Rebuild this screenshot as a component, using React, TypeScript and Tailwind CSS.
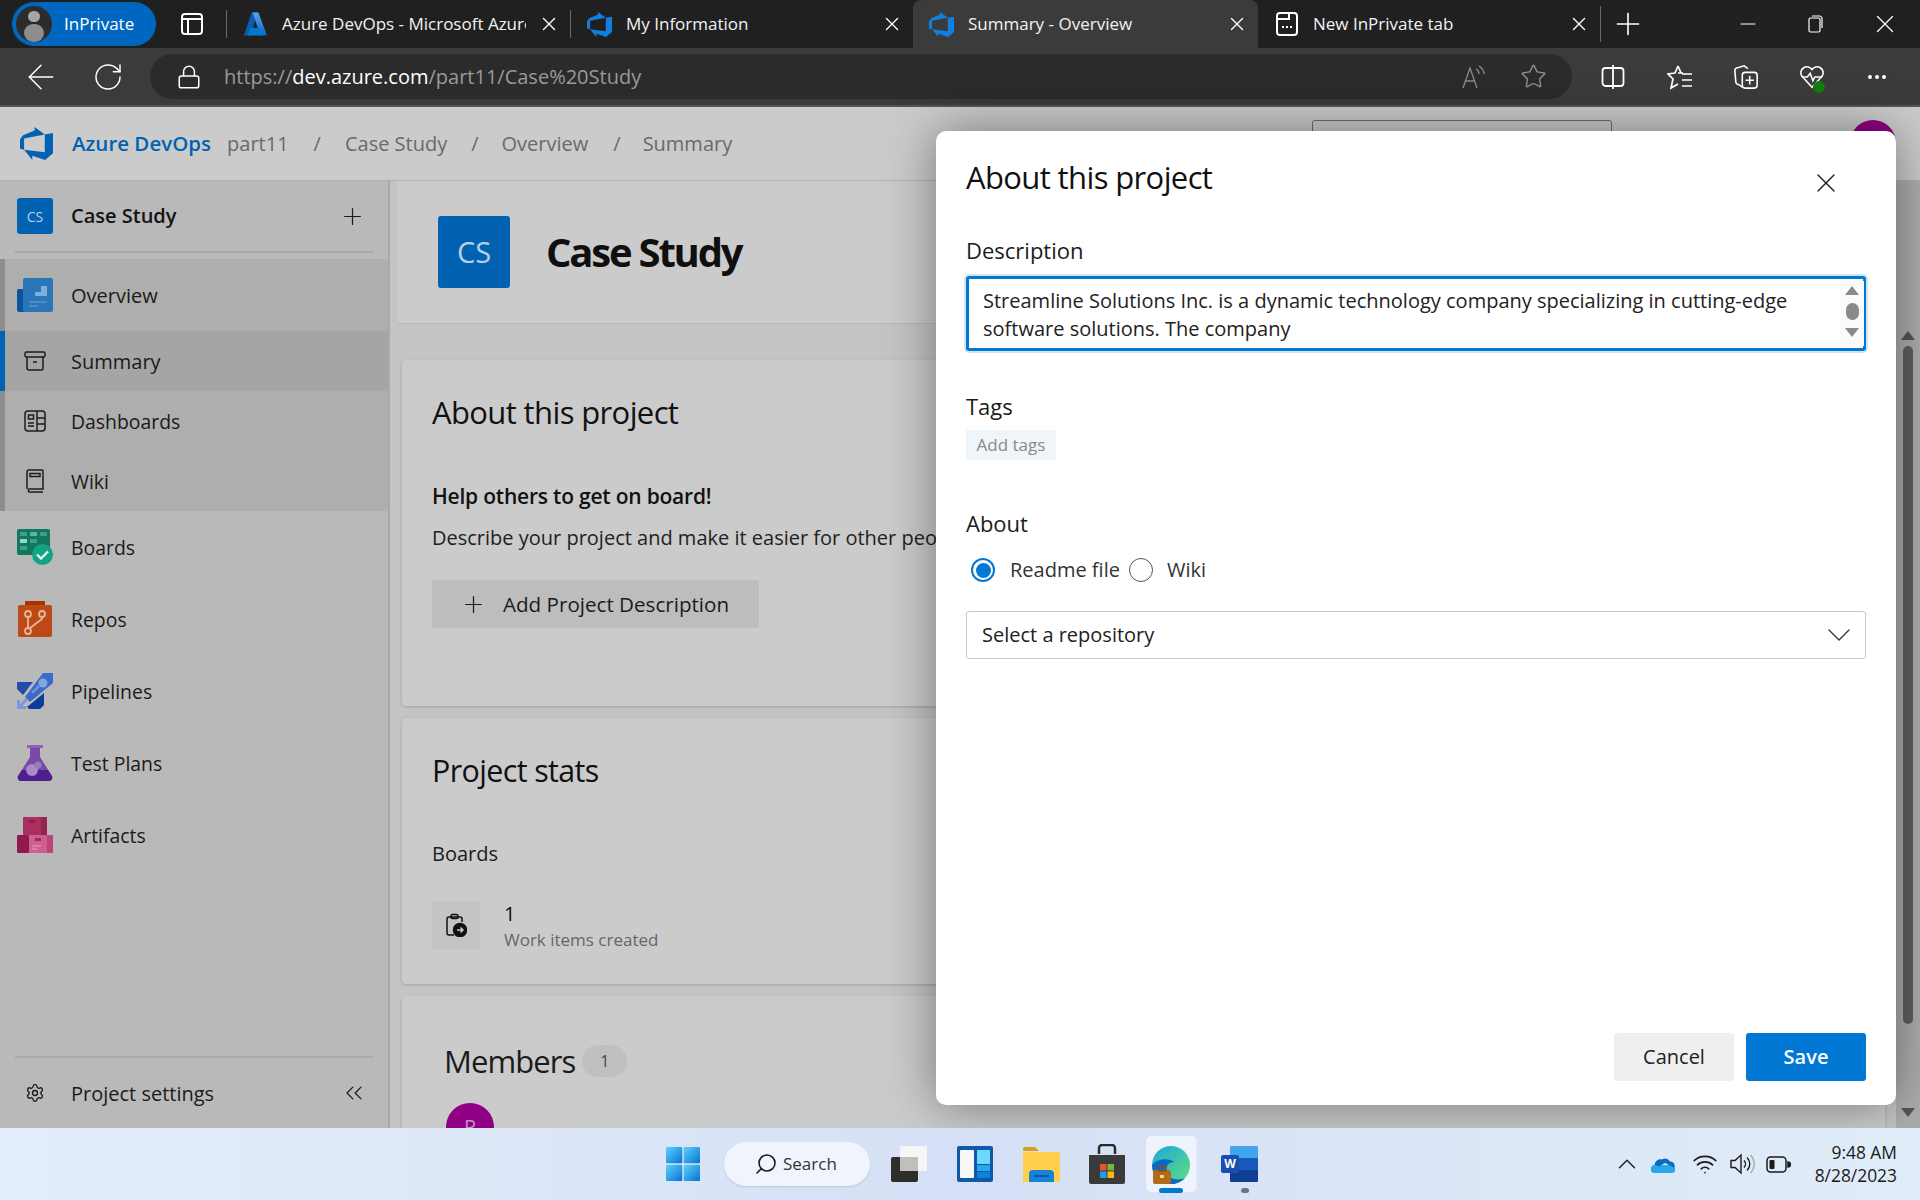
import React from 'react';
import { ArrowLeft, ChevronsLeft, ChevronDown, ChevronUp, Lock, Minus, Plus, RotateCw, Search, Settings, Star, Wifi, X } from 'lucide-react';

const DEVOPS_PATH = 'M0 8.899l2.247-2.966 8.405-3.416V.045l7.37 5.393L2.966 8.36v8.224L0 15.73zm24-4.45v14.652l-5.753 4.9-9.303-3.057v3.056l-5.978-7.416 15.057 1.796V5.438z';

const DevOpsIcon = ({ size, color }: { size: number; color: string }) => (
    <svg width={size} height={size} viewBox="0 0 24 24"><path d={DEVOPS_PATH} fill={color} /></svg>
);

const AzureIcon = () => (
    <svg width="26" height="28" viewBox="0 0 26 28">
        <defs>
            <linearGradient id="az" x1="0" y1="0" x2="0" y2="1"><stop offset="0" stopColor="#5ea0ef" /><stop offset="1" stopColor="#0669bc" /></linearGradient>
        </defs>
        <path d="M9 2h7L7 26H1z" fill="#0a5cb0" />
        <path d="M16 2l9 24h-7L10 2z" fill="url(#az)" />
        <path d="M8 18h9l3 8H5z" fill="#0078d4" />
    </svg>
);

const Tab = ({ icon, title, active, w, fade }: { icon: React.ReactNode; title: string; active?: boolean; w: string; fade?: boolean }) => (
    <div className={`${w} h-[48px] flex items-center pl-[16px] pr-[10px] shrink-0 ${active ? 'bg-[#3b3b3b] rounded-t-[8px]' : ''}`}>
        <span className="w-[25px] flex justify-center shrink-0">{icon}</span>
        <span className={`ml-[14px] flex-1 text-[17px] text-[#f2f2f2] whitespace-nowrap overflow-hidden ${fade ? 'mr-[12px]' : ''}`}>{title}</span>
        <X size={22} strokeWidth={1.5} className="text-white shrink-0" />
    </div>
);

const TabBar = () => (
    <div className="h-[48px] bg-[#202020] flex items-center shrink-0">
        <div className="ml-[12px] w-[144px] h-[44px] rounded-full bg-[#0067c0] flex items-center">
            <div className="ml-[4px] w-[36px] h-[36px] rounded-full bg-[#2c2c2c] overflow-hidden flex flex-col items-center">
                <span className="mt-[5px] w-[12px] h-[13px] rounded-full bg-[#a5a5a5]" />
                <span className="mt-[2px] w-[20px] h-[20px] rounded-full bg-[#8d8d8d]" />
            </div>
            <span className="ml-[12px] text-[17px] text-white">InPrivate</span>
        </div>
        <svg className="ml-[25px]" width="22" height="24" viewBox="0 0 22 24" fill="none" stroke="#fff" strokeWidth="2">
            <rect x="1" y="2" width="20" height="20" rx="3" />
            <path d="M1 7h20M7 7v15" />
        </svg>
        <div className="ml-[23px] w-px h-[28px] bg-[#6b6b6b]" />
        <Tab w="w-[343px]" icon={<AzureIcon />} title="Azure DevOps - Microsoft Azure" fade />
        <div className="w-px h-[28px] bg-[#6b6b6b]" />
        <Tab w="w-[342px]" icon={<DevOpsIcon size={25} color="#0f7fe0" />} title="My Information" />
        <Tab w="w-[345px]" active icon={<DevOpsIcon size={25} color="#0f7fe0" />} title="Summary - Overview" />
        <Tab
            w="w-[342px]"
            icon={
                <svg width="22" height="26" viewBox="0 0 22 26" fill="none" stroke="#fff" strokeWidth="2">
                    <rect x="1" y="2" width="20" height="22" rx="3" />
                    <path d="M1 8h12V2" />
                    <path d="M6 16h2M10 16h2M14 16h2" />
                </svg>
            }
            title="New InPrivate tab"
        />
        <div className="w-px h-[36px] bg-[#6b6b6b]" />
        <Plus size={36} strokeWidth={1.1} className="ml-[9px] text-white" />
        <Minus size={24} strokeWidth={1} className="ml-[90px] text-white" />
        <svg className="ml-[48px]" width="16" height="20" viewBox="0 0 16 20" fill="none" stroke="#fff" strokeWidth="1.2">
            <rect x="1" y="4" width="11" height="14" rx="1.5" />
            <path d="M4 2h8a3 3 0 0 1 2 2v10" />
        </svg>
        <X size={30} strokeWidth={1} className="ml-[46px] text-white" />
    </div>
);

const ToolIcon = ({ className, children }: { className?: string; children: React.ReactNode }) => (
    <span className={`w-[26px] h-[26px] flex items-center justify-center shrink-0 ${className ?? ''}`}>{children}</span>
);

const Toolbar = () => (
    <div className="h-[59px] bg-[#3b3b3b] border-b-[2px] border-[#555555] flex items-center shrink-0">
        <ArrowLeft size={40} strokeWidth={0.9} className="ml-[21px] text-white" />
        <RotateCw size={32} strokeWidth={1.1} className="ml-[31px] text-white" />
        <div className="ml-[26px] w-[1422px] h-[45px] bg-[#2b2b2b] rounded-full flex items-center">
            <Lock size={26} strokeWidth={1.4} className="ml-[26px] text-white" />
            <span className="ml-[22px] text-[20px] text-[#9a9a9a] whitespace-nowrap">
                https://<span className="text-white">dev.azure.com</span>/part11/Case%20Study
            </span>
            <div className="ml-auto flex items-center mr-[25px]">
                <svg className="mr-[33px]" width="26" height="26" viewBox="0 0 26 26" fill="none" stroke="#8a8a8a" strokeWidth="1.3">
                    <path d="M2 24L9 4l7 20M4.5 17h9" />
                    <path d="M15 5c2 1 3 3 3 5M18 2c3 2 5 5 5 8" />
                </svg>
                <Star size={27} strokeWidth={1.3} className="text-[#8a8a8a]" />
            </div>
        </div>
        <ToolIcon className="ml-[28px]">
            <svg width="24" height="26" viewBox="0 0 24 26" fill="none" stroke="#fff" strokeWidth="1.8">
                <rect x="1.5" y="4" width="21" height="18" rx="3" />
                <path d="M12 1v24" />
            </svg>
        </ToolIcon>
        <ToolIcon className="ml-[41px]">
            <svg width="26" height="26" viewBox="0 0 26 26" fill="none" stroke="#fff" strokeWidth="1.7">
                <path d="M11 2l3 7h-3l5 0M11 2L8 9l-7 1 5 5-2 9 7-4" />
                <path d="M15 10h10M15 16h10M15 22h10" />
            </svg>
        </ToolIcon>
        <ToolIcon className="ml-[40px]">
            <svg width="28" height="28" viewBox="0 0 28 28" fill="none" stroke="#fff" strokeWidth="1.7">
                <path d="M10 25L6 22a3 3 0 0 1-3-3L2 7a3 3 0 0 1 3-3l7-2 4 3" />
                <rect x="10" y="9" width="16" height="17" rx="3" />
                <path d="M18 13v9M13.5 17.5h9" />
            </svg>
        </ToolIcon>
        <ToolIcon className="ml-[40px] relative">
            <svg width="28" height="26" viewBox="0 0 28 26" fill="none" stroke="#fff" strokeWidth="1.7">
                <path d="M14 24L3 12a6 6 0 0 1 11-7 6 6 0 0 1 11 7L14 24z" />
                <path d="M3 13h6l3-4 3 8 2-4h8" />
            </svg>
            <span className="absolute right-[0px] bottom-[-3px] w-[12px] h-[12px] rounded-full bg-[#107c10]" />
        </ToolIcon>
        <span className="ml-[43px] flex gap-[3px]">
            <span className="w-[4px] h-[4px] rounded-full bg-white" />
            <span className="w-[4px] h-[4px] rounded-full bg-white" />
            <span className="w-[4px] h-[4px] rounded-full bg-white" />
        </span>
    </div>
);

const Crumb = ({ children, className }: { children: React.ReactNode; className: string }) => (
    <span className={`text-[20px] text-[#6a6a6a] whitespace-nowrap ${className}`}>{children}</span>
);

const Header = () => (
    <div className="h-[74px] bg-[#cbcbcb] border-b border-[#b2b2b2] flex items-center shrink-0 relative">
        <span className="ml-[20px]"><DevOpsIcon size={33} color="#0062b0" /></span>
        <span className="ml-[19px] text-[20.5px] font-semibold text-[#0062b0] whitespace-nowrap">Azure DevOps</span>
        <Crumb className="ml-[16px]">part11</Crumb>
        <Crumb className="ml-[25px]">/</Crumb>
        <Crumb className="ml-[24px]">Case Study</Crumb>
        <Crumb className="ml-[24px]">/</Crumb>
        <Crumb className="ml-[23px]">Overview</Crumb>
        <Crumb className="ml-[25px]">/</Crumb>
        <Crumb className="ml-[22px]">Summary</Crumb>
        <div className="absolute left-[1312px] top-[13px] w-[300px] h-[40px] rounded-[3px] border border-[#6b6b6b]" />
        <div className="absolute left-[1850px] top-[13px] w-[46px] h-[46px] rounded-full bg-[#8f0085]" />
    </div>
);

const OverviewIcon = () => (
    <svg width="36" height="34" viewBox="0 0 36 34">
        <rect x="0" y="11" width="14" height="23" rx="2" fill="#0b559c" />
        <rect x="6" y="0" width="30" height="34" rx="2" fill="#2a76b8" />
        <path d="M12 18h6v-4h6V8h6v10" fill="#7fb0d9" />
        <path d="M12 24h18M12 28h9" stroke="#6ba3d3" strokeWidth="1.2" />
    </svg>
);

const SummaryIcon = () => (
    <svg width="22" height="20" viewBox="0 0 22 20" fill="none" stroke="#1c1c1c" strokeWidth="1.5">
        <rect x="1" y="1" width="20" height="5" rx="1.5" />
        <path d="M3 6v11a2 2 0 0 0 2 2h12a2 2 0 0 0 2-2V6" />
        <path d="M9 11h4" />
    </svg>
);

const DashboardsIcon = () => (
    <svg width="22" height="22" viewBox="0 0 22 22" fill="none" stroke="#1c1c1c" strokeWidth="1.5">
        <rect x="1" y="1" width="20" height="20" rx="3" />
        <path d="M13 1v20M13 8h8M13 14h8" />
        <rect x="4.5" y="5" width="5" height="4" />
        <path d="M4 13h6M4 16h6" />
    </svg>
);

const WikiIcon = () => (
    <svg width="20" height="24" viewBox="0 0 20 24" fill="none" stroke="#1c1c1c" strokeWidth="1.5">
        <path d="M2 20V3a2 2 0 0 1 2-2h13a1 1 0 0 1 1 1v18H4a2 2 0 0 0 0 3h14" />
        <rect x="5" y="4.5" width="10" height="3" />
    </svg>
);

const BoardsIcon = () => (
    <svg width="36" height="36" viewBox="0 0 36 36">
        <rect x="0" y="0" width="33" height="26" rx="2" fill="#12775f" />
        <rect x="3" y="3" width="7" height="4" fill="#3f9e87" />
        <rect x="13" y="3" width="7" height="4" fill="#5cb39e" />
        <rect x="23" y="3" width="7" height="4" fill="#3f9e87" />
        <rect x="3" y="10" width="7" height="4" fill="#8fd8c6" />
        <rect x="13" y="10" width="7" height="4" fill="#3f9e87" />
        <rect x="3" y="17" width="7" height="4" fill="#3f9e87" />
        <circle cx="25.5" cy="25.5" r="10.5" fill="#13a385" />
        <path d="M20 25.5l4 4 7-7" fill="none" stroke="#e3f3ef" strokeWidth="2.4" />
    </svg>
);

const ReposIcon = () => (
    <svg width="34" height="36" viewBox="0 0 34 36">
        <path d="M7 0h20v4H7z" fill="#a83200" />
        <rect x="0" y="4" width="34" height="32" rx="2" fill="#bb4a16" />
        <g fill="none" stroke="#ebb39b" strokeWidth="1.8">
            <circle cx="10" cy="13" r="3" />
            <circle cx="24" cy="13" r="3" />
            <circle cx="10" cy="30" r="3" />
            <path d="M10 16v11M24 16v2l-12 9" />
        </g>
    </svg>
);

const PipelinesIcon = () => (
    <svg width="36" height="36" viewBox="0 0 36 36">
        <path d="M0 9h16L6 22l-6-6z" fill="#1f4da8" />
        <path d="M27 20v12l-4 4H12l-2-2z" fill="#0c3c9a" />
        <path d="M8 24L26 0h10v10L13 29z" fill="#3a6bc9" />
        <circle cx="26" cy="10" r="4.5" fill="#86a6df" />
        <path d="M15 20l7-7" stroke="#6f93d8" strokeWidth="2.5" />
        <path d="M0 27v9h9v-3H3v-6z" fill="#7d98d6" />
        <path d="M3 33l7-7" stroke="#7d98d6" strokeWidth="3" />
    </svg>
);

const TestPlansIcon = () => (
    <svg width="36" height="36" viewBox="0 0 36 36">
        <rect x="10" y="0" width="16" height="3" fill="#8a63b8" />
        <path d="M13 3h10v9l12 19c1 3-1 5-3 5H4c-2 0-4-2-3-5l12-19z" fill="#7a4aa8" />
        <path d="M1 31l4-6h26l4 6c1 3-1 5-3 5H4c-2 0-4-2-3-5z" fill="#4f1f8f" />
        <circle cx="15" cy="25" r="6" fill="#a98bc9" />
        <circle cx="21" cy="20" r="3.5" fill="#9c7cc0" />
    </svg>
);

const ArtifactsIcon = () => (
    <svg width="36" height="36" viewBox="0 0 36 36">
        <rect x="6" y="0" width="24" height="18" rx="1" fill="#ab2e60" />
        <rect x="24" y="0" width="6" height="18" fill="#93234f" />
        <rect x="12" y="3" width="6" height="3" fill="#8e1f4c" />
        <rect x="0" y="18" width="12" height="18" rx="1" fill="#8f1a4b" />
        <rect x="12" y="18" width="24" height="18" rx="1" fill="#cf5f8d" />
        <rect x="30" y="18" width="6" height="18" fill="#b9487a" />
        <rect x="18" y="21" width="6" height="3" fill="#9c2c5a" />
        <path d="M15 29h9M15 32h5" stroke="#e7a3bf" strokeWidth="1" />
    </svg>
);

const NavRow = ({ icon, label, h, cls, bold }: { icon: React.ReactNode; label: string; h: string; cls: string; bold?: boolean }) => (
    <div className={`${h} ${cls} flex items-center`}>
        <span className="w-[36px] flex justify-center shrink-0">{icon}</span>
        <span className={`ml-[18px] pt-[2px] text-[#1b1b1b] ${bold ? 'text-[20px] font-medium' : 'text-[19.4px]'}`}>{label}</span>
    </div>
);

const Sidebar = () => (
    <aside className="w-[390px] h-full shrink-0 bg-[#b9b9b9] border-r-[2px] border-[#a9a9a9] flex flex-col">
        <div className="h-[72px] mx-[15px] border-b-[2px] border-[#a9a9a9] flex items-center shrink-0">
            <div className="ml-[2px] w-[36px] h-[36px] rounded-[3px] bg-[#0062b0] flex items-center justify-center text-[14px] text-[#b9cfe5]">CS</div>
            <span className="ml-[18px] text-[20px] font-semibold text-[#141414]">Case Study</span>
            <Plus size={27} strokeWidth={1.1} className="ml-auto mr-[7px] text-[#1b1b1b]" />
        </div>
        <div className="mt-[6px] bg-[#aeaeae]">
            <NavRow h="h-[72px]" cls="pl-[12px] border-l-[5px] border-[#8e8e8e]" icon={<OverviewIcon />} label="Overview" bold />
            <NavRow h="h-[60px]" cls="pl-[12px] border-l-[5px] border-[#0062b0] bg-[#a5a5a5] rounded-r-[2px]" icon={<SummaryIcon />} label="Summary" bold />
            <NavRow h="h-[60px]" cls="pl-[12px] border-l-[5px] border-[#8e8e8e]" icon={<DashboardsIcon />} label="Dashboards" />
            <NavRow h="h-[60px]" cls="pl-[12px] border-l-[5px] border-[#8e8e8e]" icon={<WikiIcon />} label="Wiki" />
        </div>
        <NavRow h="h-[72px]" cls="pl-[17px]" icon={<BoardsIcon />} label="Boards" />
        <NavRow h="h-[72px]" cls="pl-[17px]" icon={<ReposIcon />} label="Repos" />
        <NavRow h="h-[72px]" cls="pl-[17px]" icon={<PipelinesIcon />} label="Pipelines" />
        <NavRow h="h-[72px]" cls="pl-[17px]" icon={<TestPlansIcon />} label="Test Plans" />
        <NavRow h="h-[72px]" cls="pl-[17px]" icon={<ArtifactsIcon />} label="Artifacts" />
        <div className="mt-auto mx-[15px] h-[72px] border-t-[2px] border-[#a9a9a9] flex items-center">
            <span className="ml-[2px] w-[36px] flex justify-center"><Settings size={20} strokeWidth={1.6} className="text-[#1b1b1b]" /></span>
            <span className="ml-[18px] pt-[2px] text-[20px] text-[#1b1b1b]">Project settings</span>
            <ChevronsLeft size={28} strokeWidth={1.1} className="ml-auto mr-[5px] text-[#1b1b1b]" />
        </div>
    </aside>
);

const Card = ({ className, children }: { className: string; children: React.ReactNode }) => (
    <section className={`w-full bg-[#cbcbcb] rounded-[4px] shadow-[0_1px_3px_rgba(0,0,0,0.18)] pl-[30px] shrink-0 ${className}`}>{children}</section>
);

const MainContent = () => (
    <main className="flex-1 h-full bg-[#c4c4c4] flex flex-col overflow-hidden min-w-0">
        <div className="h-[143px] bg-[#cbcbcb] border-b border-[#b8b8b8] ml-[8px] flex items-center shrink-0">
            <div className="ml-[40px] w-[72px] h-[72px] rounded-[3px] bg-[#0062b0] flex items-center justify-center text-[29px] text-[#b9cfe5]">CS</div>
            <h1 className="ml-[36px] text-[40px] font-bold text-[#0f0f0f] tracking-[-0.055em]">Case Study</h1>
        </div>
        <div className="ml-[12px] mr-[11px] pt-[36px] flex flex-col gap-[12px]">
            <Card className="h-[346px]">
                <h2 className="pt-[29px] text-[31px] leading-[46px] font-medium text-[#111111] tracking-[-0.02em]">About this project</h2>
                <div className="mt-[46px] text-[21px] leading-[30px] font-semibold tracking-[-0.01em] text-[#111111]">Help others to get on board!</div>
                <p className="mt-[12px] w-[504px] overflow-hidden text-[20px] leading-[30px] text-[#222222] whitespace-nowrap">Describe your project and make it easier for other peop</p>
                <button className="mt-[27px] w-[327px] h-[48px] bg-[#bdbdbd] rounded-[3px] flex items-center text-[#1b1b1b]">
                    <Plus size={27} strokeWidth={1.1} className="ml-[28px]" />
                    <span className="ml-[16px] text-[20.6px] font-medium">Add Project Description</span>
                </button>
            </Card>
            <Card className="h-[266px]">
                <h2 className="pt-[30px] text-[30.4px] leading-[46px] font-medium text-[#111111] tracking-[-0.02em]">Project stats</h2>
                <div className="mt-[45px] text-[20px] leading-[30px] text-[#1b1b1b]">Boards</div>
                <div className="mt-[32px] flex items-start">
                    <div className="w-[48px] h-[48px] bg-[#c4c4c4] flex items-center justify-center">
                        <svg width="22" height="24" viewBox="0 0 22 24" fill="none" stroke="#111" strokeWidth="1.5">
                            <path d="M9 22H4a2 2 0 0 1-2-2V6a2 2 0 0 1 2-2h11a2 2 0 0 1 2 2v3" />
                            <rect x="6" y="1.5" width="7" height="4" rx="1.5" />
                            <circle cx="15" cy="17" r="6.5" fill="#111" />
                            <path d="M12 17h6M15.5 14.5L18 17l-2.5 2.5" stroke="#cbcbcb" />
                        </svg>
                    </div>
                    <div className="ml-[24px]">
                        <div className="text-[20px] leading-[26px] font-medium text-[#111111]">1</div>
                        <div className="text-[17px] leading-[26px] text-[#666666]">Work items created</div>
                    </div>
                </div>
            </Card>
            <Card className="h-[200px]">
                <div className="pt-[45px] pl-[12px] flex items-center">
                    <h2 className="text-[31px] leading-[40px] font-medium text-[#1b1b1b] tracking-[-0.03em]">Members</h2>
                    <span className="ml-[7px] w-[45px] h-[32px] rounded-full bg-[#c0c0c0] flex items-center justify-center text-[16px] text-[#444444]">1</span>
                </div>
                <div className="mt-[22px] ml-[14px] w-[48px] h-[48px] rounded-full bg-[#8f0085] flex items-center justify-center text-[20px] text-[#c890c4]">P</div>
            </Card>
        </div>
    </main>
);

const PageScrollbar = () => (
    <div className="w-[24px] h-full shrink-0 bg-[#adadad] flex flex-col items-center">
        <span className="mt-[150px] w-0 h-0 border-x-[7px] border-x-transparent border-b-[9px] border-b-[#555555]" />
        <span className="mt-[6px] w-[10px] h-[678px] rounded-full bg-[#5f5f5f]" />
        <span className="mt-[84px] w-0 h-0 border-x-[7px] border-x-transparent border-t-[9px] border-t-[#555555]" />
    </div>
);

const FieldLabel = ({ className, children }: { className: string; children: React.ReactNode }) => (
    <div className={`text-[22px] leading-[28px] font-medium text-[#1b1b1b] ${className}`}>{children}</div>
);

const Modal = () => (
    <div className="absolute left-[936px] top-[24px] w-[960px] h-[974px] bg-white rounded-[10px] shadow-[0_0_50px_rgba(0,0,0,0.42)] pl-[30px] pr-[30px] flex flex-col">
        <div className="pt-[23px] flex items-start justify-between">
            <h2 className="text-[31px] leading-[46px] font-medium text-[#111111] tracking-[-0.02em]">About this project</h2>
            <X size={32} strokeWidth={1} className="mt-[13px] mr-[24px] text-[#222222]" />
        </div>
        <FieldLabel className="mt-[36px]">Description</FieldLabel>
        <div className="mt-[12px] h-[75px] border-[3px] border-[#0078d4] rounded-[3px] shadow-[0_0_0_2px_#cfe4f5] flex pl-[14px] pt-[8px] relative">
            <p className="w-[830px] text-[20px] leading-[28px] text-[#222222]">
                Streamline Solutions Inc. is a dynamic technology company specializing in cutting-edge software solutions. The company
            </p>
            <div className="absolute right-[-1px] top-[2px] bottom-[2px] w-[24px] bg-[#fbfbfb] flex flex-col items-center">
                <span className="mt-[5px] w-0 h-0 border-x-[7px] border-x-transparent border-b-[9px] border-b-[#8a8a8a]" />
                <span className="mt-[8px] w-[13px] h-[17px] rounded-full bg-[#8a8a8a]" />
                <span className="mt-[8px] w-0 h-0 border-x-[7px] border-x-transparent border-t-[9px] border-t-[#8a8a8a]" />
            </div>
        </div>
        <FieldLabel className="mt-[41px]">Tags</FieldLabel>
        <div className="mt-[10px] w-[90px] h-[30px] bg-[#f0f5fa] flex items-center justify-center text-[17px] text-[#8a8a8a]">Add tags</div>
        <FieldLabel className="mt-[49px]">About</FieldLabel>
        <div className="mt-[21px] h-[24px] flex items-center text-[#333333] text-[20px]">
            <span className="ml-[5px] w-[24px] h-[24px] rounded-full border-[2px] border-[#0078d4] flex items-center justify-center">
                <span className="w-[15px] h-[15px] rounded-full bg-[#0078d4]" />
            </span>
            <span className="ml-[15px]">Readme file</span>
            <span className="ml-[9px] w-[24px] h-[24px] rounded-full border border-[#555555]" />
            <span className="ml-[14px]">Wiki</span>
        </div>
        <div className="mt-[29px] h-[48px] border border-[#c8c8c8] rounded-[3px] flex items-center px-[15px] text-[20px] text-[#222222]">
            Select a repository
            <ChevronDown size={40} strokeWidth={0.8} className="ml-auto mr-[-9px] text-[#333333]" />
        </div>
        <div className="mt-auto mb-[24px] flex justify-end gap-[12px]">
            <button className="w-[120px] h-[48px] rounded-[3px] bg-[#efefef] text-[20px] text-[#222222]">Cancel</button>
            <button className="w-[120px] h-[48px] rounded-[3px] bg-[#0078d4] text-[20px] font-semibold text-white">Save</button>
        </div>
    </div>
);

const StartIcon = () => (
    <svg width="34" height="34" viewBox="0 0 34 34">
        <defs>
            <linearGradient id="win" x1="0" y1="0" x2="1" y2="1"><stop offset="0" stopColor="#5ed2fb" /><stop offset="1" stopColor="#0672d4" /></linearGradient>
        </defs>
        <rect width="16.3" height="16.3" rx="1" fill="url(#win)" />
        <rect x="17.7" width="16.3" height="16.3" rx="1" fill="url(#win)" />
        <rect y="17.7" width="16.3" height="16.3" rx="1" fill="url(#win)" />
        <rect x="17.7" y="17.7" width="16.3" height="16.3" rx="1" fill="url(#win)" />
    </svg>
);

const TaskViewIcon = () => (
    <svg width="36" height="36" viewBox="0 0 36 36">
        <rect x="0" y="11" width="27" height="25" rx="2" fill="#2f2d2c" />
        <rect x="9" y="0" width="27" height="25" rx="1" fill="#f6f6f6" />
        <rect x="9" y="11" width="18" height="14" fill="#c1bfbd" />
    </svg>
);

const WidgetsIcon = () => (
    <svg width="36" height="36" viewBox="0 0 36 36">
        <rect width="36" height="36" rx="2" fill="#0f5aa8" />
        <rect x="3" y="4" width="14" height="28" rx="1" fill="#f7f7f7" />
        <rect x="20" y="4" width="13" height="14" fill="#6bd8fd" />
        <rect x="20" y="19" width="13" height="6" fill="#25a8f0" />
        <rect x="20" y="26" width="13" height="6" fill="#0f80d8" />
    </svg>
);

const FolderIcon = () => (
    <svg width="37" height="36" viewBox="0 0 37 36">
        <path d="M0 3a2 2 0 0 1 2-2h10l4 4h-16z" fill="#d8a20c" />
        <path d="M0 6h35a2 2 0 0 1 2 2v28H0z" fill="#ffcf4d" />
        <path d="M6 36v-8a4 4 0 0 1 4-4h17a4 4 0 0 1 4 4v8z" fill="#1683d8" />
        <rect x="11" y="29" width="15" height="2" fill="#0b5aa8" />
    </svg>
);

const StoreIcon = () => (
    <svg width="36" height="40" viewBox="0 0 36 40">
        <path d="M10 10V4a3 3 0 0 1 3-3h10a3 3 0 0 1 3 3v6" fill="none" stroke="#2b2b2b" strokeWidth="2.5" />
        <path d="M0 11h36v27a2 2 0 0 1-2 2H2a2 2 0 0 1-2-2z" fill="#3a3a3a" />
        <rect x="11" y="20" width="6.5" height="6.5" fill="#e8512d" />
        <rect x="18.5" y="20" width="6.5" height="6.5" fill="#7cb82f" />
        <rect x="11" y="27.5" width="6.5" height="6.5" fill="#18a0ea" />
        <rect x="18.5" y="27.5" width="6.5" height="6.5" fill="#fcb813" />
    </svg>
);

const EdgeIcon = () => (
    <svg width="38" height="38" viewBox="0 0 38 38">
        <defs>
            <linearGradient id="edge" x1="0" y1="0" x2="1" y2="1"><stop offset="0" stopColor="#1ea7dc" /><stop offset="1" stopColor="#5fe07c" /></linearGradient>
        </defs>
        <circle cx="19" cy="19" r="19" fill="url(#edge)" />
        <path d="M0 19a19 19 0 0 0 33 13c-8 3-15 1-18-4-3-6 1-12 7-12-3-3-15-5-22 3z" fill="#0c68c4" />
        <rect x="1" y="24" width="18" height="14" rx="2" fill="#b06a1c" />
        <rect x="6" y="21" width="8" height="4" rx="1" fill="none" stroke="#8a4f10" strokeWidth="1.5" />
        <rect x="8" y="29" width="4" height="3" fill="#f2d27a" />
    </svg>
);

const WordIcon = () => (
    <svg width="36" height="36" viewBox="0 0 36 36">
        <rect x="8" y="0" width="28" height="36" rx="2" fill="#2b7cd3" />
        <rect x="8" y="12" width="28" height="12" fill="#185abd" />
        <rect x="8" y="24" width="28" height="12" rx="1" fill="#103f91" />
        <rect x="8" y="0" width="28" height="12" rx="2" fill="#41a5ee" />
    </svg>
);

const Taskbar = () => (
    <footer className="h-[72px] shrink-0 bg-gradient-to-r from-[#e4eefa] via-[#d5e0f6] to-[#e0ecf8] flex items-center relative">
        <span className="ml-[666px]"><StartIcon /></span>
        <div className="ml-[24px] w-[146px] h-[44px] rounded-full bg-[#f0f5fd] shadow-[0_1px_2px_rgba(0,0,0,0.12)] flex items-center">
            <Search size={24} strokeWidth={1.6} className="ml-[30px] text-[#1b1b1b] -scale-x-100" />
            <span className="ml-[5px] text-[17px] text-[#333333]">Search</span>
        </div>
        <span className="ml-[21px]"><TaskViewIcon /></span>
        <span className="ml-[30px]"><WidgetsIcon /></span>
        <span className="ml-[30px]"><FolderIcon /></span>
        <span className="ml-[29px]"><StoreIcon /></span>
        <div className="ml-[21px] w-[50px] h-[56px] rounded-[5px] bg-[#eef3fc] shadow-[2px_0_0_#dfe7f6] flex flex-col items-center pt-[10px] relative">
            <EdgeIcon />
            <span className="absolute bottom-[-1px] w-[24px] h-[5px] rounded-full bg-[#0078d4]" />
        </div>
        <div className="ml-[26px] relative">
            <WordIcon />
            <span className="absolute left-[-1px] top-[9px] w-[18px] h-[18px] rounded-[2px] bg-[#1a4fb0] text-[12px] leading-[18px] font-bold text-white text-center">W</span>
            <span className="absolute left-[19px] bottom-[-11px] w-[8px] h-[5px] rounded-full bg-[#6f7680]" />
        </div>
        <div className="ml-auto mr-[23px] flex items-center">
            <ChevronUp size={30} strokeWidth={1.1} className="text-[#1b1b1b]" />
            <svg className="ml-[9px]" width="24" height="17" viewBox="0 0 24 17">
                <path d="M4 17a4 4 0 0 1-.5-8h17a4 4 0 0 1 0 8z" fill="#28a8ea" />
                <path d="M3.5 9A6 6 0 0 1 11 3.5a5.5 5.5 0 0 1 8 2A4 4 0 0 1 23 11.5L14 7l-6 3.5z" fill="#0f6cbd" />
            </svg>
            <Wifi size={26} strokeWidth={1.5} className="ml-[17px] text-[#1b1b1b]" />
            <svg className="ml-[11px]" width="26" height="24" viewBox="0 0 26 24" fill="none" stroke="#1b1b1b" strokeWidth="1.4">
                <path d="M2 8.5h4L12 3v18l-6-5.5H2z" />
                <path d="M15 8.5a5 5 0 0 1 0 7M18 5.5a9 9 0 0 1 0 13" />
                <path d="M21.5 3a13 13 0 0 1 0 18" stroke="#a8a8a8" />
            </svg>
            <svg className="ml-[11px]" width="25" height="17" viewBox="0 0 25 17" fill="none" stroke="#1b1b1b" strokeWidth="1.5">
                <rect x="1" y="1" width="19" height="15" rx="3.5" />
                <rect x="3.5" y="4" width="5" height="9" rx="1" fill="#1b1b1b" stroke="none" />
                <path d="M22 6a2.5 2.5 0 0 1 0 5z" fill="#1b1b1b" />
            </svg>
            <div className="ml-[24px] text-right text-[17.4px] leading-[23px] text-[#1b1b1b]">
                <div>9:48 AM</div>
                <div>8/28/2023</div>
            </div>
        </div>
    </footer>
);

const App = () => {
    return (
        <div className="w-[1920px] h-[1200px] overflow-hidden flex flex-col font-['Open_Sans',sans-serif] bg-[#c4c4c4]">
            <TabBar />
            <Toolbar />
            <div className="flex-1 min-h-0 flex flex-col relative">
                <Header />
                <div className="flex-1 min-h-0 flex">
                    <Sidebar />
                    <MainContent />
                    <PageScrollbar />
                </div>
                <Modal />
            </div>
            <Taskbar />
        </div>
    );
};

export default App;
